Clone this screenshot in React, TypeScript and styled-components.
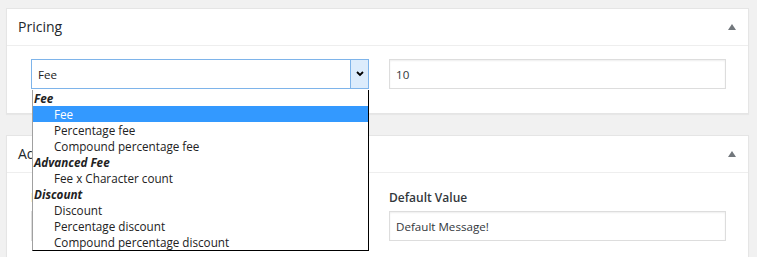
import styled, { createGlobalStyle } from "styled-components"

const Global = createGlobalStyle`
  html, body {
    margin: 0;
    background: #f1f1f1;
    font-family: "Open Sans", "Noto Sans", sans-serif;
    color: #23282d;
  }
`

const Page = styled.div`
  padding: 8px 8px 0 6px;
  display: flex;
  flex-direction: column;
  gap: 21px;
  height: 257px;
  overflow: hidden;
  box-sizing: border-box;
`

const Panel = styled.section`
  background: #fff;
  border: 1px solid #e5e5e5;
  box-shadow: 0 1px 1px rgba(0, 0, 0, 0.04);
`

const Header = styled.div`
  height: 36px;
  display: flex;
  align-items: center;
  justify-content: space-between;
  padding: 0 12px 0 11px;
  border-bottom: 1px solid #eee;
`

const Title = styled.h2`
  margin: 0;
  font-size: 14px;
  font-weight: 400;
  line-height: 1;
`

const Toggle = styled.span`
  width: 0;
  height: 0;
  border-left: 4px solid transparent;
  border-right: 4px solid transparent;
  border-bottom: 6px solid #72777c;
`

const Body = styled.div<{ $pad: string }>`
  display: grid;
  grid-template-columns: 338px 337px;
  column-gap: 20px;
  padding: ${(p) => p.$pad};
`

const Field = styled.div`
  position: relative;
  display: flex;
  flex-direction: column;
  gap: 5px;
`

const Label = styled.label`
  font-size: 12px;
  font-weight: 600;
  color: #32373c;
  line-height: 16px;
`

const TextBox = styled.div`
  height: 30px;
  box-sizing: border-box;
  border: 1px solid #ddd;
  box-shadow: inset 0 1px 2px rgba(0, 0, 0, 0.07);
  display: flex;
  align-items: center;
  padding: 0 6px;
  font-size: 11.6px;
  color: #32373c;
`

const SelectBox = styled.div`
  height: 30px;
  box-sizing: border-box;
  border: 1px solid #7eb4ea;
  display: flex;
  align-items: stretch;
  font-size: 11.6px;
  color: #222;
`

const SelectValue = styled.span`
  flex: 1;
  display: flex;
  align-items: center;
  padding-left: 6px;
`

const ArrowButton = styled.span`
  width: 17px;
  background: #dcecfc;
  border-left: 1px solid #7eb4ea;
  display: flex;
  align-items: center;
  justify-content: center;
`

const ListBox = styled.div`
  position: absolute;
  top: 31px;
  left: 1px;
  width: 337px;
  box-sizing: border-box;
  background: #fff;
  border: 1px solid #000;
  border-left-color: #a0a0a0;
  border-top: none;
  z-index: 10;
  font-size: 11.7px;
  color: #222;
`

const Group = styled.div`
  height: 16px;
  line-height: 16px;
  padding-left: 1px;
  font-weight: 700;
  font-style: italic;
`

const Option = styled.div<{ $active?: boolean }>`
  height: 16px;
  line-height: 16px;
  padding-left: 21px;
  background: ${(p) => (p.$active ? "#3399ff" : "transparent")};
  color: ${(p) => (p.$active ? "#fff" : "#222")};
`

const groups = [
  { name: "Fee", options: ["Fee", "Percentage fee", "Compound percentage fee"] },
  { name: "Advanced Fee", options: ["Fee x Character count"] },
  { name: "Discount", options: ["Discount", "Percentage discount", "Compound percentage discount"] },
]

export default function App() {
  return (
    <>
      <Global />
      <Page>
        <Panel>
          <Header>
            <Title>Pricing</Title>
            <Toggle />
          </Header>
          <Body $pad="13px 22px 24px 24px">
            <Field>
              <SelectBox>
                <SelectValue>Fee</SelectValue>
                <ArrowButton>
                  <svg width="8" height="6" viewBox="0 0 8 6">
                    <path d="M1 1l3 3 3-3" fill="none" stroke="#000" strokeWidth="1.8" />
                  </svg>
                </ArrowButton>
              </SelectBox>
              <ListBox>
                {groups.map((g) => (
                  <div key={g.name}>
                    <Group>{g.name}</Group>
                    {g.options.map((o, i) => (
                      <Option key={o} $active={g.name === "Fee" && i === 0}>
                        {o}
                      </Option>
                    ))}
                  </div>
                ))}
              </ListBox>
            </Field>
            <Field>
              <TextBox>10</TextBox>
            </Field>
          </Body>
        </Panel>
        <Panel>
          <Header>
            <Title>Advanced</Title>
            <Toggle />
          </Header>
          <Body $pad="17px 22px 24px 24px">
            <Field>
              <Label>Default Message</Label>
              <TextBox />
            </Field>
            <Field>
              <Label>Default Value</Label>
              <TextBox>Default Message!</TextBox>
            </Field>
          </Body>
        </Panel>
      </Page>
    </>
  )
}
